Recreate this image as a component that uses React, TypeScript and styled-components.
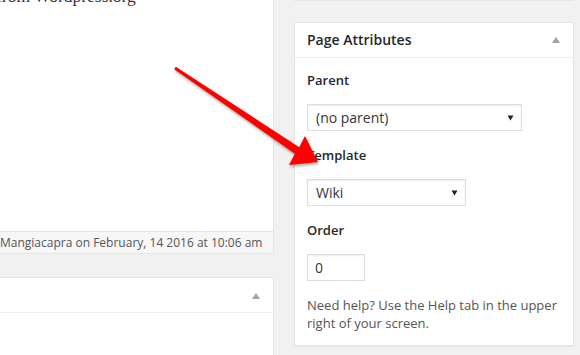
import React from "react";
import styled, { createGlobalStyle } from "styled-components";

const GlobalStyle = createGlobalStyle`
  html, body {
    margin: 0;
    padding: 0;
    background: #f1f1f1;
    overflow: hidden;
  }
  body {
    font-family: "Open Sans", "Noto Sans", sans-serif;
    color: #23282d;
  }
  * { box-sizing: border-box; }
`;

const Page = styled.div`
  position: relative;
  width: 580px;
  height: 355px;
  overflow: hidden;
  display: flex;
  align-items: flex-start;
  gap: 20px;
`;

const LeftColumn = styled.div`
  width: 274px;
  flex: none;
  display: flex;
  flex-direction: column;
`;

const EditorPanel = styled.div`
  height: 254px;
  background: #fff;
  border-right: 1px solid #e5e5e5;
  border-bottom: 1px solid #e5e5e5;
  display: flex;
  flex-direction: column;
`;

const EditorText = styled.div`
  font-family: "Liberation Serif", "DejaVu Serif", serif;
  font-size: 17.5px;
  line-height: 20px;
  color: #333;
  white-space: nowrap;
  margin-top: -14px;
  margin-left: -4px;
  flex: 1;
`;

const StatusBar = styled.div`
  height: 22px;
  border-top: 1px solid #e5e5e5;
  background: #f7f7f7;
  font-size: 12px;
  line-height: 21px;
  color: #555;
  text-align: right;
  padding-right: 11px;
  white-space: nowrap;
  overflow: hidden;
`;

const CollapsedPanel = styled.div`
  margin-top: 23px;
  height: 120px;
  background: #fff;
  border-top: 1px solid #e5e5e5;
  border-right: 1px solid #e5e5e5;
`;

const PanelHeader = styled.div`
  height: 35px;
  border-bottom: 1px solid #eee;
  display: flex;
  align-items: center;
  justify-content: space-between;
  padding: 0 13px 0 12px;
`;

const HeaderTitle = styled.h2`
  margin: 0;
  font-size: 14px;
  font-weight: 600;
  line-height: 34px;
  color: #23282d;
`;

const Toggle = styled.span<{ $nudge?: number }>`
  display: block;
  width: 0;
  height: 0;
  border-left: 4.5px solid transparent;
  border-right: 4.5px solid transparent;
  border-bottom: 6px solid #a0a5aa;
  margin-top: ${(p) => p.$nudge ?? 0}px;
`;

const RightColumn = styled.div`
  width: 280px;
  flex: none;
  display: flex;
  flex-direction: column;
`;

const StubPanel = styled.div`
  height: 1px;
  border-bottom: 1px solid #e5e5e5;
`;

const Postbox = styled.div`
  margin-top: 21px;
  background: #fff;
  border: 1px solid #e5e5e5;
  box-shadow: 0 1px 1px rgba(0, 0, 0, 0.04);
`;

const PostboxBody = styled.div`
  padding: 0 12px 13px 12px;
  display: flex;
  flex-direction: column;
  align-items: flex-start;
`;

const FieldLabel = styled.div<{ $first?: boolean }>`
  margin-top: ${(p) => (p.$first ? 13 : 15)}px;
  font-size: 13px;
  font-weight: 600;
  line-height: 18px;
  color: #23282d;
`;

const SelectBox = styled.div<{ $width: number }>`
  margin-top: 15px;
  width: ${(p) => p.$width}px;
  height: 27px;
  border: 1px solid #ddd;
  box-shadow: inset 0 1px 2px rgba(0, 0, 0, 0.07);
  background: #fff;
  display: flex;
  align-items: center;
  justify-content: space-between;
  padding: 0 7px 0 8px;
  font-size: 14px;
  color: #32373c;
`;

const InputBox = styled.div`
  margin-top: 15px;
  width: 58px;
  height: 27px;
  border: 1px solid #ddd;
  box-shadow: inset 0 1px 2px rgba(0, 0, 0, 0.07);
  background: #fff;
  display: flex;
  align-items: center;
  padding: 0 7px;
  font-size: 14px;
  color: #32373c;
`;

const HelpText = styled.p`
  margin: 15px 0 0 0;
  font-size: 13px;
  line-height: 18px;
  color: #555;
`;

const ArrowLayer = styled.svg`
  position: absolute;
  left: 0;
  top: 0;
  pointer-events: none;
  filter: drop-shadow(1px 2px 1.5px rgba(0, 0, 0, 0.35));
`;

const Caret = () => (
  <svg width="7" height="6" viewBox="0 0 7 6">
    <path d="M0.5 0.5 L6.5 0.5 L3.5 5.5 Z" fill="#222" />
  </svg>
);

export default function App() {
  return (
    <>
      <GlobalStyle />
      <Page>
        <LeftColumn>
          <EditorPanel>
            <EditorText>from Wordpress.org</EditorText>
            <StatusBar>Mangiacapra on February, 14 2016 at 10:06 am</StatusBar>
          </EditorPanel>
          <CollapsedPanel>
            <PanelHeader>
              <HeaderTitle />
              <Toggle $nudge={1} />
            </PanelHeader>
          </CollapsedPanel>
        </LeftColumn>
        <RightColumn>
          <StubPanel />
          <Postbox>
            <PanelHeader>
              <HeaderTitle>Page Attributes</HeaderTitle>
              <Toggle />
            </PanelHeader>
            <PostboxBody>
              <FieldLabel $first>Parent</FieldLabel>
              <SelectBox $width={215}>
                <span>(no parent)</span>
                <Caret />
              </SelectBox>
              <FieldLabel>Template</FieldLabel>
              <SelectBox $width={159}>
                <span>Wiki</span>
                <Caret />
              </SelectBox>
              <FieldLabel>Order</FieldLabel>
              <InputBox>0</InputBox>
              <HelpText>
                Need help? Use the Help tab in the upper right of your screen.
              </HelpText>
            </PostboxBody>
          </Postbox>
        </RightColumn>
        <ArrowLayer width="580" height="355" viewBox="0 0 580 355">
          <polygon
            points="175.8,66.8 299.2,147.2 305,136 318,162 289,165 294.8,153.8 174.2,69.2"
            fill="#f00"
          />
        </ArrowLayer>
      </Page>
    </>
  );
}
